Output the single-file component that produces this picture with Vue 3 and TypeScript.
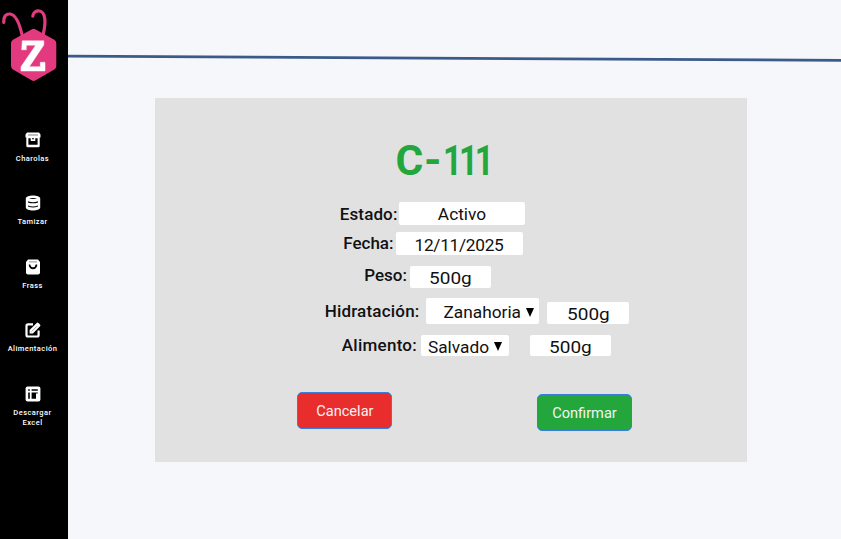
<script setup lang="ts">
interface Field {
  id: string
  label: string
  value: string
  select?: boolean
  amount?: string
}

const nav: { id: string; lines: string[] }[] = [
  { id: 'charolas', lines: ['Charolas'] },
  { id: 'tamizar', lines: ['Tamizar'] },
  { id: 'frass', lines: ['Frass'] },
  { id: 'alimentacion', lines: ['Alimentación'] },
  { id: 'excel', lines: ['Descargar', 'Excel'] },
]

const fields: Field[] = [
  { id: 'estado', label: 'Estado:', value: 'Activo' },
  { id: 'fecha', label: 'Fecha:', value: '12/11/2025' },
  { id: 'peso', label: 'Peso:', value: '500g' },
  { id: 'hidratacion', label: 'Hidratación:', value: 'Zanahoria', select: true, amount: '500g' },
  { id: 'alimento', label: 'Alimento:', value: 'Salvado', select: true, amount: '500g' },
]
</script>

<template>
  <div class="app">
    <aside class="sidebar">
      <svg class="logo" width="68" height="84" viewBox="0 0 68 84">
        <g fill="none" stroke="#e3397f" stroke-linecap="round" stroke-width="3.2">
          <path d="M3.8 22.3C3.5 16 6 13.8 10 14C16 14.6 19.5 23 22.3 36" />
          <path d="M32.8 16.2C33.2 12.5 36 10.5 39.5 11C45.5 12 46.3 22 43 35" />
        </g>
        <path d="M31.5 29.4Q33.6 28.2 35.7 29.4L54.3 39.7Q56.3 41 56.3 43.2V66Q56.3 68.2 54.3 69.5L35.7 80.3Q33.6 81.5 31.5 80.3L13 69.5Q11 68.2 11 66V43.2Q11 41 13 39.7Z" fill="#e3397f" />
        <path d="M22.3 40.8H43.8V45L29.3 66.7H40.3V62.3H45V71H21V66.8L35.7 45.2H26.3V49.8H21.7Z" fill="#fff" stroke="#fff" stroke-width=".5" stroke-linejoin="round" />
      </svg>
      <nav class="nav">
        <a v-for="item in nav" :key="item.id" class="nav-item">
          <svg class="icon" width="16" height="16" viewBox="0 0 16 16">
            <template v-if="item.id === 'charolas'">
              <path d="M2 .5H14L15.5 2.5V5.5H14.7V14Q14.7 15.2 13.2 15.2H2.8Q1.3 15.2 1.3 14V5.5H.5V2.5Z" fill="#fff" />
              <path d="M3 3H13" stroke="#777" stroke-width=".9" />
              <path d="M3.4 6.2H5.7V9H10.3V6.2H12.6V12.8H3.4Z" fill="#000" />
              <path d="M7 6.2H9V7.2H7Z" fill="#000" />
            </template>
            <template v-else-if="item.id === 'tamizar'">
              <path d="M.8 3.5C.8-.5 15.2-.5 15.2 3.5V12.5C15.2 16.5.8 16.5.8 12.5Z" fill="#fff" />
              <path d="M4 3.4Q8 2.4 12 3.4Q8 4.4 4 3.4M3 6.3Q8 8.2 13 6.3V7.4Q8 9.2 3 7.4ZM3 10.5Q8 12.3 13 10.5V11.6Q8 13.4 3 11.6Z" fill="#000" />
            </template>
            <template v-else-if="item.id === 'frass'">
              <path d="M3 .5H13L15 3V13.5Q15 15.5 13 15.5H3Q1 15.5 1 13.5V3Z" fill="#fff" />
              <path d="M4 2.9H12" stroke="#777" stroke-width=".8" />
              <path d="M3.8 5.4H5.3Q5.7 8.2 8 8.2T10.7 5.4H12.2V6.6Q11.5 10.2 8 10.2T3.8 6.6Z" fill="#000" />
            </template>
            <template v-else-if="item.id === 'alimentacion'">
              <path d="M8 2.4H3Q1.5 2.4 1.5 4V13Q1.5 14.5 3 14.5H12Q13.6 14.5 13.6 13V8.5" fill="none" stroke="#fff" stroke-width="2.2" />
              <path d="M4.6 8.1L11.7 1Q12.6.1 13.5 1L15 2.5Q15.9 3.4 15 4.3L7.9 11.4H4.6Z" fill="#fff" />
              <path d="M6.5 9.7L12 4.2" fill="none" stroke="#777" stroke-width=".7" />
            </template>
            <template v-else>
              <rect x=".6" y=".6" width="14.8" height="14.8" rx="2" fill="#fff" />
              <path d="M3.2 3.2H4.8V4.7H3.2ZM6.6 3.2H12.8V4.7H6.6ZM3.2 6.5H4.8V12.8H3.2ZM6.6 6.5H12.8V7.6H11V12.8H6.6Z" fill="#000" />
            </template>
          </svg>
          <span v-for="line in item.lines" :key="line" class="nav-line">{{ line }}</span>
        </a>
      </nav>
    </aside>

    <main class="main">
      <header class="header">
        <svg width="773" height="12" viewBox="0 0 773 12">
          <path d="M0 4.2L773 8.3" stroke="#3c5a89" stroke-width="2.8" />
        </svg>
      </header>

      <section class="card">
        <h1 class="title"><span class="letter">C</span><span class="dash">-</span><span class="ones">111</span></h1>
        <div v-for="f in fields" :key="f.id" class="row" :class="f.id">
          <span class="label">{{ f.label }}</span>
          <span class="box main-box">
            <span class="value">{{ f.value }}</span>
            <svg v-if="f.select" class="arrow" width="8" height="9" viewBox="0 0 8 9"><path d="M0 0H8L4 9Z" /></svg>
          </span>
          <span v-if="f.amount" class="box amount"><span class="value">{{ f.amount }}</span></span>
        </div>
        <div class="actions">
          <button class="btn cancel" type="button">Cancelar</button>
          <button class="btn confirm" type="button">Confirmar</button>
        </div>
      </section>
    </main>
  </div>
</template>

<style>
body { margin: 0; overflow: hidden; }
</style>

<style scoped>
.app { display: flex; width: 841px; height: 539px; background: #f5f7fb; font-family: Roboto, "Liberation Sans", sans-serif; }
.sidebar { width: 68px; height: 539px; background: #000; flex: none; }
.logo { display: block; }
.nav { display: flex; flex-direction: column; padding-top: 47.6px; width: 65px; }
.nav-item { display: flex; flex-direction: column; align-items: center; height: 63.5px; flex: none; color: #fff; font-size: 7.5px; font-weight: 500; line-height: 10.7px; white-space: nowrap; letter-spacing: .45px; }
.icon { display: block; margin-bottom: 6px; flex: none; }
.main { flex: 1; box-sizing: border-box; border-right: 1px solid #e6e8ec; }
.header { height: 46.4px; padding-top: 52px; overflow: hidden; }
.header svg { display: block; }
.card { width: 592px; height: 364px; margin-left: 86.5px; background: #e1e1e1; overflow: hidden; }
.title { margin: 37.6px 0 0 241px; height: 50px; display: flex; color: #23a63c; font-size: 42.5px; line-height: 50px; font-weight: 700; }
.letter { width: 28.2px; }
.dash { width: 19.3px; transform: scaleX(1.05); transform-origin: left; }
.ones { letter-spacing: -4px; transform: scaleX(.78); transform-origin: left; }
.row { display: flex; color: #111; font-size: 17.3px; }
.label { text-align: right; font-weight: 500; font-size: 17px; letter-spacing: .12px; line-height: 23px; white-space: nowrap; flex: none; }
.box { display: flex; align-items: center; justify-content: center; background: #fff; border-radius: 2px; box-sizing: border-box; flex: none; white-space: nowrap; }
.value { position: relative; top: 1px; }
.estado { margin-top: 15.9px; height: 30.5px; }
.estado .label { width: 243px; margin-right: 1px; line-height: 25px; }
.estado .main-box { width: 126px; height: 23px; }
.estado .value { left: .5px; }
.fecha { height: 33.5px; }
.fecha .label { width: 239px; margin-right: 2px; letter-spacing: 0; }
.fecha .main-box { width: 127px; height: 23px; }
.fecha .value { letter-spacing: -.3px; }
.peso { height: 32.5px; }
.peso .label { width: 252.5px; margin-right: 2.5px; line-height: 18px; letter-spacing: 0; }
.peso .main-box { width: 81.5px; height: 22px; }
.peso .value, .amount .value { transform: scaleX(1.1); left: .5px; }
.hidratacion { height: 36.5px; }
.hidratacion .label { width: 265px; margin-right: 6px; line-height: 27px; letter-spacing: .2px; }
.hidratacion .main-box { width: 113px; height: 25.5px; padding-left: 13px; }
.hidratacion .amount { width: 82px; height: 22px; margin: 3.5px 0 0 8px; }
.alimento { height: 57px; }
.alimento .label { width: 262.5px; margin-right: 3.5px; line-height: 20px; letter-spacing: .25px; }
.alimento .main-box { width: 88.5px; height: 21.5px; }
.alimento .amount { width: 81.5px; height: 21.5px; margin-left: 20.5px; }
.arrow { position: relative; top: 1px; margin-left: 4.5px; flex: none; }
.actions { display: flex; align-items: flex-start; padding-left: 142.9px; }
.btn { width: 95px; height: 37px; padding: 1px 0 0; border: 1px solid #3b7ddd; border-radius: 5px; color: #f4f4f4; font: 400 14.6px Roboto, sans-serif; }
.cancel { background: #e92c2c; }
.confirm { background: #23a63c; margin: 2px 0 0 144.6px; }
</style>
